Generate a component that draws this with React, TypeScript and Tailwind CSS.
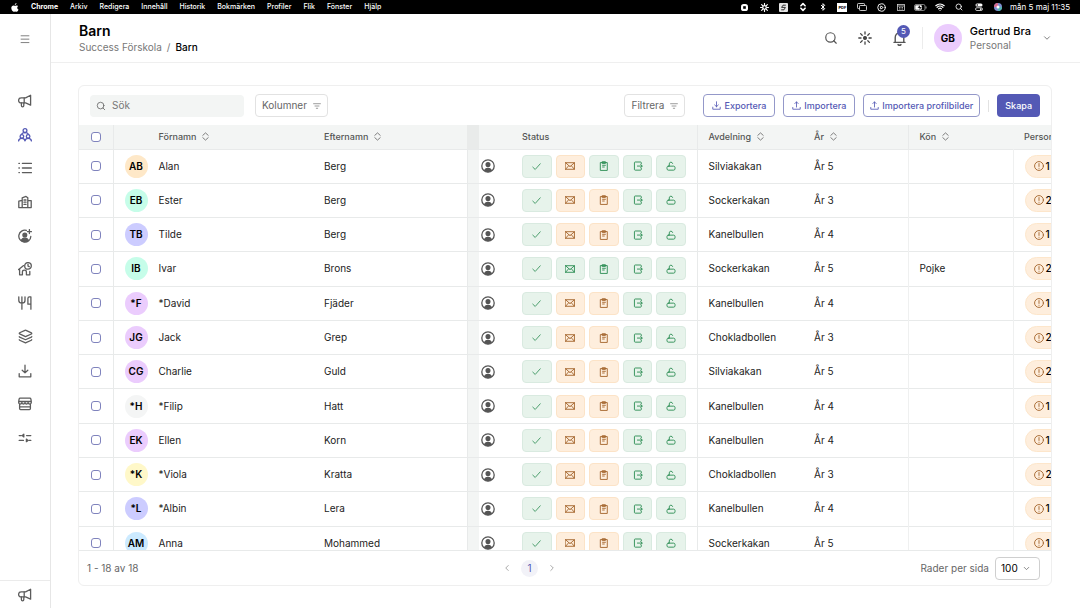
import { useState } from 'react';
import clsx from 'clsx';
import {
    Bluetooth,
    ChevronDown,
    ChevronLeft,
    ChevronRight,
    ChevronsUpDown,
    CirclePlay,
    Layers,
    Search,
    Wifi,
} from 'lucide-react';

interface IconProps {
    className?: string;
    children?: React.ReactNode;
}

// 14px grid, used by the side menu
const Glyph: React.FC<IconProps> = ({ className = 'size-[14px]', children }) => (
    <svg
        viewBox="0 0 14 14"
        fill="none"
        stroke="currentColor"
        strokeWidth="1.3"
        strokeLinecap="round"
        strokeLinejoin="round"
        aria-hidden="true"
        className={clsx('shrink-0', className)}
    >
        {children}
    </svg>
);

const MegaphoneIcon = () => (
    <Glyph>
        <path d="M12.6 1.2v10L7.6 8.9H3.1a2.4 2.4 0 0 1 0-5h4.500l5-2.700z" />
        <path d="M6.200 3.900v5M3.400 9v2.600a1.200 1.200 0 0 0 2.400 0V9" />
    </Glyph>
);

const GroupIcon = () => (
    <Glyph>
        <circle cx="7" cy="2.6" r="1.9" />
        <circle cx="3.9" cy="8.4" r="1.8" />
        <circle cx="10.1" cy="8.4" r="1.8" />
        <path d="M3.600 6.200C4 5.100 5 4.600 7 4.600s3 .5 3.400 1.600M.6 12.800c.2-1.600 1.400-2.500 3.300-2.500 1.700 0 2.800.9 3.100 2.500.3-1.600 1.400-2.500 3.100-2.500 1.900 0 3.100.9 3.300 2.500" />
    </Glyph>
);

const ListIcon = () => (
    <Glyph>
        <path d="M4.400 2.400h9M4.400 7h9M4.400 11.600h9M.9 2.400h.5M.9 7h.5M.9 11.600h.5" />
    </Glyph>
);

const BuildingIcon = () => (
    <Glyph>
        <path d="M4.200 12.600V2.800L8 1.400l1.800 1.400v9.800M.8 12.600V6.200l3.400-.8M9.800 5.600h3.400v7M.8 12.600h12.400M6 5h2M6 7.200h2M6 9.400h2" />
    </Glyph>
);

const UserPlusIcon = () => (
    <Glyph>
        <path d="M8.400 1.400A6 6 0 1 0 12.800 7.400M11.400.6v4M9.400 2.600h4" />
        <circle cx="6.8" cy="6" r="1.900" fill="currentColor" />
        <path d="M3.300 11.200c.8-1.400 2-2 3.500-2s2.800.6 3.600 2c-2 2-5.200 2-7.100 0z" fill="currentColor" />
    </Glyph>
);

const HouseClockIcon = () => (
    <Glyph>
        <circle cx="10" cy="3.900" r="3.300" />
        <path d="M10 2.200v1.900l1.200.6M5.600 3.600 1.600 6.800v6h2.800V10c0-1 .8-1.800 2-1.800s2 .8 2 1.800v2.800h3.400V9.400M.6 7.600l1-.8" />
    </Glyph>
);

const CutleryIcon = () => (
    <Glyph>
        <path d="M.8.8v3.800c0 1.800 1.200 2.600 3.100 2.600S7 6.400 7 4.600V.8M3.900.8v12.400M12.900.8v12.400M12.900.8h-1.500c-.9 0-1.500.7-1.500 1.600v5.800h3" />
    </Glyph>
);

const DownloadIcon: React.FC<IconProps> = ({ className }) => (
    <Glyph className={className}>
        <path d="M7 1.200v7.600M4.200 6.200 7 8.900l2.800-2.700M1.200 9.600v3.200h11.600V9.600" />
    </Glyph>
);

const UploadIcon: React.FC<IconProps> = ({ className }) => (
    <Glyph className={className}>
        <path d="M7 9.400V1.400M4.400 4 7 1.400 9.600 4M1.200 10v2.800h11.600V10" />
    </Glyph>
);

const StoreIcon = () => (
    <Glyph>
        <path d="M1.600 7v4.600c0 .6.4 1 1 1h8.800c.6 0 1-.4 1-1V7M2.200 1.200h9.600c.6 0 1 .4 1.100.9l.4 2.400H.7l.4-2.400c.1-.5.500-.9 1.100-.9zM.7 4.500v1c0 2 3.200 2 3.200 0 0 2 3.100 2 3.100 0 0 2 3.100 2 3.100 0 0 2 3.200 2 3.200 0v-1M1.600 9.800h10.800" />
    </Glyph>
);

const SlidersIcon = () => (
    <Glyph>
        <path d="M1.200 4.600h2.200M8.600 4.600h4.200M1.200 9.400h4.200M10.800 9.400h2" />
        <path d="M5.800 3.300v2.600L4.300 4.600zM8.400 8.100v2.600l1.500-1.300z" fill="currentColor" />
    </Glyph>
);

const FilterIcon = () => (
    <Glyph className="size-2 text-[#7a7a7a]">
        <path d="M1 3h12M3.500 7h7M5.800 11h2.400" />
    </Glyph>
);

const SortIcon = () => (
    <Glyph className="size-[9px] text-[#666]">
        <path d="M2.800 5.200 7 1.400l4.200 3.800M2.800 8.800 7 12.600l4.200-3.800" />
    </Glyph>
);

const BurstIcon: React.FC<IconProps> = ({ className }) => (
    <Glyph className={className}>
        <circle cx="7" cy="7" r="1.400" fill="currentColor" />
        <path d="M7 .8v2.200M7 11v2.200M.8 7H3M11 7h2.200M2.600 2.600l1.600 1.600M9.800 9.800l1.600 1.600M2.600 11.400l1.600-1.600M9.800 4.200l1.600-1.600" />
    </Glyph>
);

const BellIcon = () => (
    <Glyph className="size-[15px] text-[#555]">
        <path d="M1.800 10.600h10.400M3 10.600V6c0-2.500 1.600-4.200 4-4.200S11 3.500 11 6v4.600M5.600 12.700c.8.7 2 .7 2.800 0" />
    </Glyph>
);

const PersonIcon = () => (
    <Glyph className="size-[14px] text-[#555]">
        <circle cx="7" cy="7" r="6.200" />
        <circle cx="7" cy="5.600" r="1.900" fill="currentColor" />
        <path d="M3.600 11.200C4.400 9.800 5.500 9.300 7 9.300s2.600.5 3.400 1.900c-1.800 1.700-5 1.700-6.800 0z" fill="currentColor" />
    </Glyph>
);

const CheckIcon = () => (
    <Glyph className="size-[9px]">
        <path d="M1.200 8 5 11.600 12.800 2.800" />
    </Glyph>
);

const MailIcon = () => (
    <Glyph className="size-[10px]">
        <path d="M.8 2.400h12.400v9.200H.8zM.8 2.400 7 8l6.200-5.600M.8 11.600l4.400-5M13.200 11.600l-4.400-5" />
    </Glyph>
);

const ClipboardIcon = () => (
    <Glyph className="size-[10px]">
        <path d="M2.400 2.200h9.200v11H2.400zM5 1h4v2.400H5zM5 6h4M5 8.400h2.400" />
    </Glyph>
);

const ExitIcon = () => (
    <Glyph className="size-[10px]">
        <path d="M11.600 4V2.400c0-.6-.4-1-1-1H3c-.6 0-1 .4-1 1v9.400c0 .6.4 1 1 1h7.600c.6 0 1-.4 1-1V10M6.200 7.100h6.600M10.800 5l2 2.100-2 2.100" />
    </Glyph>
);

const LockIcon = () => (
    <Glyph className="size-[10px]">
        <path d="M3.200 7.200h7.600c1 0 1.800.8 1.800 1.800v2c0 1-.8 1.800-1.800 1.800H3.200c-1 0-1.800-.8-1.800-1.800V9c0-1 .8-1.800 1.800-1.800zM4.600 7.200V4a2.400 2.400 0 0 1 4.700-.6" />
    </Glyph>
);

const AlertIcon = () => (
    <Glyph className="size-[10px]">
        <circle cx="7" cy="7" r="6.200" />
        <path d="M7 3.600v4M7 10.100v.2" />
    </Glyph>
);

const MENU = ['Arkiv', 'Redigera', 'Innehåll', 'Historik', 'Bokmärken', 'Profiler', 'Flik', 'Fönster', 'Hjälp'];

const MenuBar = () => (
    <div className="flex items-center justify-between h-[14px] shrink-0 bg-black text-white text-[7px] font-medium pl-[11px] pr-[10px]">
        <div className="flex items-center gap-3">
            <svg viewBox="0 0 16 18" fill="currentColor" className="w-2 h-[9px]" aria-hidden="true">
                <path d="M11 0c.1 1-.3 2-.9 2.700-.7.800-1.600 1.300-2.500 1.200-.1-1 .4-2 .9-2.600C9.100.6 10.200.1 11 0zM14.300 6.200c-1.200.8-1.900 1.800-1.900 3.200 0 1.700 1 3 2.600 3.600-.5 1.600-2 4.400-3.600 4.500-1.200 0-1.700-.7-3.100-.7s-1.900.7-3.100.7C3 17.500.6 13.600.6 10.200c0-3.300 2.100-5.300 4.300-5.300 1.300 0 2.400.8 3.200.8s2.100-.9 3.700-.8c1 0 2 .5 2.500 1.300z" />
            </svg>
            <span className="font-bold">Chrome</span>
            {MENU.map((item) => (
                <span key={item}>{item}</span>
            ))}
        </div>
        <div className="flex items-center gap-[2px]">
            <div className="grid grid-cols-14 w-[273px] place-items-center">
                <svg viewBox="0 0 8 8" className="size-[7px]" aria-hidden="true">
                    <rect width="8" height="8" rx="3" fill="white" />
                    <rect x="2.500" y="2.500" width="3" height="3" fill="black" />
                </svg>
                <Glyph className="size-[9px]">
                    <circle cx="7" cy="7" r="2.800" strokeWidth="2" />
                    <path d="M7 .8v2M7 11.200v2M.8 7h2M11.200 7h2M2.600 2.600 4 4M10 10l1.400 1.400M2.600 11.400 4 10M10 4l1.400-1.400" strokeWidth="1.800" />
                </Glyph>
                <svg viewBox="0 0 9 9" className="size-[9px]" aria-hidden="true">
                    <rect width="9" height="9" rx="1" fill="#e4e4e4" />
                    <path d="M6.800 2.200H4L2.600 4.400h3.800L5 6.800H2.200" fill="none" stroke="#333" />
                </svg>
                <ChevronsUpDown className="size-[10px]" strokeWidth={4} />
                <Bluetooth className="size-2" strokeWidth={3} />
                <span className="bg-white text-black text-[4px] font-bold leading-[9px] px-px">PDF</span>
                <svg viewBox="0 0 20 16" fill="none" stroke="#ddd" strokeWidth="1.800" className="w-[10px] h-2" aria-hidden="true">
                    <path d="M5 11H2.500A1.500 1.500 0 0 1 1 9.500v-7A1.500 1.500 0 0 1 2.500 1h11A1.500 1.500 0 0 1 15 2.500V5" />
                    <rect x="5" y="5" width="14" height="10" rx="1.500" />
                </svg>
                <CirclePlay className="size-[9px]" strokeWidth={2.500} />
                <svg viewBox="0 0 16 14" fill="none" stroke="#ddd" strokeWidth="1.500" className="w-2 h-[7px]" aria-hidden="true">
                    <rect x="1" y="1" width="14" height="12" />
                    <path d="M1 4h14M4 7h3M9 7h3M4 10h3M9 10h3" />
                </svg>
                <svg viewBox="0 0 26 14" className="w-[13px] h-[7px]" aria-hidden="true">
                    <rect x="1" y="1" width="21" height="12" rx="3" fill="none" stroke="#aaa" strokeWidth="1.500" />
                    <rect x="2.500" y="2.500" width="13" height="9" rx="1.500" fill="white" />
                    <path d="M12 1.500 7 8h4l-1 5 6-7h-4z" fill="black" stroke="white" strokeWidth=".6" />
                    <path d="M24 5v4" stroke="#aaa" strokeWidth="2" />
                </svg>
                <Wifi className="size-[10px]" strokeWidth={3} />
                <Search className="size-2" strokeWidth={2.500} />
                <svg viewBox="0 0 16 16" className="size-2" aria-hidden="true">
                    <rect x="1" y="1" width="14" height="6" rx="3" fill="white" />
                    <circle cx="4.500" cy="4" r="1.600" fill="black" />
                    <rect x="1" y="9.500" width="14" height="5.500" rx="2.750" fill="none" stroke="white" strokeWidth="1.500" />
                    <circle cx="11.500" cy="12.200" r="1.800" fill="white" />
                </svg>
                <svg viewBox="0 0 8 8" className="size-2" aria-hidden="true">
                    <circle cx="4" cy="4" r="4" fill="#7d8fd0" />
                    <path d="M4 4 0 4a4 4 0 0 1 4-4z" fill="#d86a8f" />
                    <path d="M4 4v4a4 4 0 0 0 4-4z" fill="#52b7b0" />
                    <circle cx="4" cy="4" r="1.500" fill="white" />
                </svg>
            </div>
            <span className="text-[8px] font-normal whitespace-nowrap">mån 5 maj 11:35</span>
        </div>
    </div>
);

const NAV = [
    { label: 'Nyheter', icon: <MegaphoneIcon /> },
    { label: 'Barn', icon: <GroupIcon />, active: true },
    { label: 'Listor', icon: <ListIcon /> },
    { label: 'Enheter', icon: <BuildingIcon /> },
    { label: 'Personal', icon: <UserPlusIcon /> },
    { label: 'Scheman', icon: <HouseClockIcon /> },
    { label: 'Måltider', icon: <CutleryIcon /> },
    { label: 'Innehåll', icon: <Layers className="size-[15px]" strokeWidth={2} /> },
    { label: 'Filer', icon: <DownloadIcon /> },
    { label: 'Butik', icon: <StoreIcon /> },
    { label: 'Inställningar', icon: <SlidersIcon /> },
];

const Sidebar = () => (
    <aside className="flex flex-col w-[51px] shrink-0 border-r border-[#e6e6e6] text-[#5c5c5c]">
        <button type="button" aria-label="Meny" className="flex items-center justify-center h-[50px] text-[#777]">
            <Glyph className="size-[10px]">
                <path d="M1.500 2.500h11M1.500 7.200h11M1.500 12h11" />
            </Glyph>
        </button>
        <nav className="grid grid-rows-11 h-[371px] mt-5">
            {NAV.map(({ label, icon, active }) => (
                <a
                    key={label}
                    href="#"
                    aria-label={label}
                    className={clsx('flex items-center justify-center', active && 'text-[#5459b5]')}
                >
                    {icon}
                </a>
            ))}
        </nav>
        <a href="#" aria-label="Feedback" className="flex items-center justify-center h-7 mt-auto border-t border-[#ebebeb]">
            <MegaphoneIcon />
        </a>
    </aside>
);

const Header = () => (
    <header className="flex items-center justify-between h-[49px] shrink-0 border-b border-[#efefef] px-7">
        <div>
            <h1 className="text-sm leading-[18px] font-semibold">Barn</h1>
            <div className="flex gap-[5px] text-[10px] leading-[14px] text-[#777]">
                <a href="#">Success Förskola</a>
                <span>/</span>
                <span className="font-medium text-black">Barn</span>
            </div>
        </div>
        <div className="flex items-center">
            <div className="flex items-center gap-5">
                <button type="button" aria-label="Sök">
                    <Search className="size-[14px] text-[#555]" strokeWidth={2} />
                </button>
                <button type="button" aria-label="Tema">
                    <BurstIcon className="size-[14px] text-[#444]" />
                </button>
                <button type="button" aria-label="Notiser" className="relative">
                    <BellIcon />
                    <span className="absolute -top-[6px] left-[5px] flex items-center justify-center size-[13px] rounded-full bg-[#5459b5] text-white text-[8px]">
                        5
                    </span>
                </button>
            </div>
            <div className="w-px h-[22px] bg-[#ececec] ml-[15px] mr-[11px]" />
            <button type="button" className="flex items-center text-left">
                <span className="flex items-center justify-center size-7 rounded-full bg-[#ebccfd] text-[10px] font-bold">GB</span>
                <span className="ml-2 mr-[11px]">
                    <span className="block text-[11px] leading-[14px] font-medium">Gertrud Bra</span>
                    <span className="block text-[10px] leading-[14px] text-[#777]">Personal</span>
                </span>
                <ChevronDown className="size-[10px] text-[#666]" />
            </button>
        </div>
    </header>
);

const Toolbar = () => (
    <div className="flex items-center h-[39px] shrink-0 px-[11px] text-[10px] text-[#666]">
        <label className="flex items-center gap-[6px] w-[154px] h-[22px] rounded-[4px] bg-[#f3f5f4] px-[6px]">
            <Search className="size-[10px] shrink-0" aria-hidden="true" />
            <input
                type="text"
                aria-label="Sök"
                placeholder="Sök"
                className="w-full bg-transparent outline-none placeholder:text-[#777]"
            />
        </label>
        <button type="button" className="flex items-center gap-[6px] h-[23px] ml-[11px] px-[6px] rounded-[4px] border border-[#e2e2e2]">
            Kolumner
            <FilterIcon />
        </button>
        <button type="button" className="flex items-center gap-[6px] h-[23px] ml-auto px-[6px] rounded-[4px] border border-[#e2e2e2]">
            Filtrera
            <FilterIcon />
        </button>
        <div className="flex items-center gap-2 ml-[18px] text-[9px] font-medium text-[#5459b5]">
            <button type="button" className="flex items-center gap-[3px] h-[23px] px-2 rounded-[4px] border border-[#9498c9]">
                <DownloadIcon className="size-[9px]" />
                Exportera
            </button>
            <button type="button" className="flex items-center gap-[3px] h-[23px] px-2 rounded-[4px] border border-[#9498c9]">
                <UploadIcon className="size-[9px]" />
                Importera
            </button>
            <button type="button" className="flex items-center gap-[3px] h-[23px] px-[6px] rounded-[4px] border border-[#9498c9]">
                <UploadIcon className="size-[9px]" />
                Importera profilbilder
            </button>
            <div className="w-px h-3 bg-[#e2e2e2]" />
            <button type="button" className="h-[23px] px-2 rounded-[4px] bg-[#5459b5] text-white">
                Skapa
            </button>
        </div>
    </div>
);

interface Child {
    initials: string;
    color: string;
    first: string;
    last: string;
    mail?: boolean;
    form?: boolean;
    unit: string;
    year: number;
    gender?: string;
    missing: number;
}

const CHILDREN: Child[] = [
    { initials: 'AB', color: 'bg-[#fee8c8]', first: 'Alan', last: 'Berg', form: true, unit: 'Silviakakan', year: 5, missing: 1 },
    { initials: 'EB', color: 'bg-[#c6fde9]', first: 'Ester', last: 'Berg', unit: 'Sockerkakan', year: 3, missing: 2 },
    { initials: 'TB', color: 'bg-[#ccccff]', first: 'Tilde', last: 'Berg', unit: 'Kanelbullen', year: 4, missing: 1 },
    { initials: 'IB', color: 'bg-[#c6fde9]', first: 'Ivar', last: 'Brons', mail: true, form: true, unit: 'Sockerkakan', year: 5, gender: 'Pojke', missing: 2 },
    { initials: '*F', color: 'bg-[#ebccfd]', first: '*David', last: 'Fjäder', unit: 'Kanelbullen', year: 4, missing: 1 },
    { initials: 'JG', color: 'bg-[#ebccfd]', first: 'Jack', last: 'Grep', unit: 'Chokladbollen', year: 3, missing: 2 },
    { initials: 'CG', color: 'bg-[#ebccfd]', first: 'Charlie', last: 'Guld', unit: 'Silviakakan', year: 5, missing: 2 },
    { initials: '*H', color: 'bg-[#f4f5f5]', first: '*Filip', last: 'Hatt', unit: 'Kanelbullen', year: 4, missing: 1 },
    { initials: 'EK', color: 'bg-[#ebccfd]', first: 'Ellen', last: 'Korn', unit: 'Kanelbullen', year: 4, missing: 1 },
    { initials: '*K', color: 'bg-[#fff8c9]', first: '*Viola', last: 'Kratta', unit: 'Chokladbollen', year: 3, missing: 2 },
    { initials: '*L', color: 'bg-[#ccccff]', first: '*Albin', last: 'Lera', unit: 'Kanelbullen', year: 4, missing: 1 },
    { initials: 'AM', color: 'bg-[#cceaff]', first: 'Anna', last: 'Mohammed', unit: 'Sockerkakan', year: 5, missing: 1 },
];

const Checkbox = ({ label }: { label: string }) => (
    <input
        type="checkbox"
        aria-label={label}
        className="block size-[10px] mx-auto appearance-none rounded-[3px] border border-[#7f83bd] bg-white checked:bg-[#5459b5]"
    />
);

interface StatusProps {
    label: string;
    ok: boolean;
    children: React.ReactNode;
}

const StatusButton: React.FC<StatusProps> = ({ label, ok, children }) => (
    <button
        type="button"
        aria-label={label}
        className={clsx(
            'flex items-center justify-center h-[23px] rounded-[4px] border',
            ok ? 'bg-[#e7f3eb] border-[#d9eae0] text-[#2f8f55]' : 'bg-[#feeedd] border-[#fce3c7] text-[#a5672f]',
        )}
    >
        {children}
    </button>
);

const SortHeader = ({ label }: { label: string }) => (
    <button type="button" className="flex items-center gap-[5px]">
        {label}
        <SortIcon />
    </button>
);

const Row = ({ child }: { child: Child }) => (
    <tr className="border-b border-[#e8eaea]">
        <td className="border-r border-[#e8eaea]">
            <Checkbox label={`Välj ${child.first}`} />
        </td>
        <td className="pl-[11px]">
            <div className="flex items-center gap-[11px]">
                <span className={clsx('flex items-center justify-center size-[23px] rounded-full text-[10px] font-semibold text-black', child.color)}>
                    {child.initials}
                </span>
                {child.first}
            </div>
        </td>
        <td className="pl-[11px] border-r border-[#e8eaea]">{child.last}</td>
        <td className="bg-[#f3f5f4]" />
        <td className="pl-[2px]">
            <PersonIcon />
        </td>
        <td className="pl-[11px] border-r border-[#e8eaea]">
            <div className="grid grid-cols-5 gap-1 w-[164px]">
                <StatusButton label="Aktiv" ok><CheckIcon /></StatusButton>
                <StatusButton label="Inbjudan" ok={!!child.mail}><MailIcon /></StatusButton>
                <StatusButton label="Formulär" ok={!!child.form}><ClipboardIcon /></StatusButton>
                <StatusButton label="Hämtning" ok><ExitIcon /></StatusButton>
                <StatusButton label="Låst" ok><LockIcon /></StatusButton>
            </div>
        </td>
        <td className="pl-[11px]">{child.unit}</td>
        <td className="pl-[11px] border-r border-[#eff0f0]">År {child.year}</td>
        <td className="pl-[11px] border-r border-[#eff0f0]">{child.gender}</td>
        <td className="pl-[11px]">
            <span className="flex items-center gap-[2px] w-20 h-[23px] rounded-full border border-[#fde6cb] bg-[#feeedd] pl-2 text-[#a5672f]">
                <AlertIcon />
                <span className="font-medium text-black">{child.missing}</span>
            </span>
        </td>
    </tr>
);

const ChildrenTable = () => (
    <div className="flex-1 min-h-0 overflow-hidden">
        <table className="table-fixed w-[1046px] h-[436px] text-[10px] text-[#222]">
            <colgroup>
                <col className="w-[34px]" />
                <col className="w-[200px]" />
                <col className="w-[154px]" />
                <col className="w-3" />
                <col className="w-8" />
                <col className="w-[186px]" />
                <col className="w-[106px]" />
                <col className="w-[105px]" />
                <col className="w-[105px]" />
                <col />
            </colgroup>
            <thead>
                <tr className="h-6 border-b border-[#e8eaea] bg-[#f3f5f4] text-left text-[9px] text-[#555] [&>th]:font-medium">
                    <th className="border-r border-[#e8eaea]">
                        <Checkbox label="Välj alla" />
                    </th>
                    <th className="pl-[45px]"><SortHeader label="Förnamn" /></th>
                    <th className="pl-[11px]"><SortHeader label="Efternamn" /></th>
                    <th className="bg-[#e9ebea]" />
                    <th />
                    <th className="pl-[11px] border-r border-[#e8eaea]">Status</th>
                    <th className="pl-[11px]"><SortHeader label="Avdelning" /></th>
                    <th className="pl-[11px] border-r border-[#e8eaea]"><SortHeader label="År" /></th>
                    <th className="pl-[11px]"><SortHeader label="Kön" /></th>
                    <th className="pl-[11px]">Personnummer</th>
                </tr>
            </thead>
            <tbody>
                {CHILDREN.map((child) => (
                    <Row key={child.first} child={child} />
                ))}
            </tbody>
        </table>
    </div>
);

const Pagination = () => {
    const [perPage, setPerPage] = useState('100');

    return (
        <footer className="flex items-center justify-between h-[35px] shrink-0 border-t border-[#e8eaea] pl-2 pr-[11px] text-[10px] text-[#666]">
            <span>1 - 18 av 18</span>
            <div className="flex items-center gap-[9px]">
                <button type="button" aria-label="Föregående sida"><ChevronLeft className="size-[10px] text-[#999]" /></button>
                <button type="button" className="size-[17px] rounded-full bg-[#f2f2f8] text-[#5459b5]">1</button>
                <button type="button" aria-label="Nästa sida"><ChevronRight className="size-[10px] text-[#999]" /></button>
            </div>
            <div className="flex items-center gap-[6px]">
                <label htmlFor="per-page">Rader per sida</label>
                <div className="relative">
                    <select
                        id="per-page"
                        value={perPage}
                        onChange={(e) => setPerPage(e.target.value)}
                        className="block w-[45px] h-[23px] appearance-none rounded-[4px] border border-[#cfcfcf] bg-white pl-[5px] text-[10px] text-black"
                    >
                        <option>25</option>
                        <option>50</option>
                        <option>100</option>
                    </select>
                    <ChevronDown className="absolute right-[9px] top-[7px] size-[9px] pointer-events-none" />
                </div>
            </div>
        </footer>
    );
};

export default function App() {
    return (
        <div className="flex flex-col h-screen overflow-hidden bg-white text-black font-['Inter',sans-serif]">
            <MenuBar />
            <div className="flex flex-1 min-h-0">
                <Sidebar />
                <div className="flex flex-col flex-1 min-w-0">
                    <Header />
                    <main className="flex flex-col flex-1 min-h-0 pl-[27px] pr-7 py-[22px]">
                        <section className="flex flex-col flex-1 min-h-0 overflow-hidden rounded-md border border-[#efefef]">
                            <Toolbar />
                            <ChildrenTable />
                            <Pagination />
                        </section>
                    </main>
                </div>
            </div>
        </div>
    );
}
